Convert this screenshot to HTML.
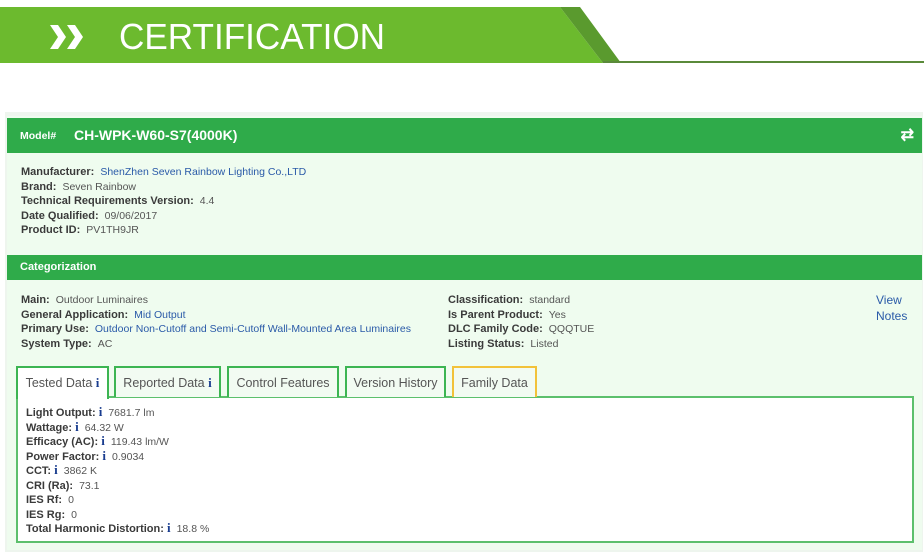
<!DOCTYPE html>
<html><head><style>
*{margin:0;padding:0;box-sizing:border-box}
body{width:924px;height:559px;background:#fff;font-family:"Liberation Sans",Arial,sans-serif;position:relative;overflow:hidden}
.ab{position:absolute}
.lbl{font-weight:bold;color:#3a3a3a;font-size:11px}
.val{color:#555;font-size:10.5px;margin-left:6px}
.lnk{color:#2a5aa8;font-size:10.5px;margin-left:6px}
.row{height:14.5px;line-height:14.5px;white-space:nowrap}
.i{color:#1a3d8f;font-weight:bold;font-family:"Liberation Serif",serif;font-size:13px}
.tab{position:absolute;top:366px;height:31px;border:2px solid #3cb552;border-bottom:none;background:#f2fbf2;color:#555;font-size:12.5px;line-height:30px;text-align:center}
</style></head><body>
<svg class="ab" style="left:0;top:0" width="924" height="70">
<polygon points="0,7 560,7 603,63 0,63" fill="#6cba2e"/>
<polygon points="560,7 580,7 621,63 603,63" fill="#5a9a2e"/>
<rect x="603" y="61" width="321" height="2" fill="#5a8a3a"/>
<polygon points="50,25 58,25 66,37 58,49 50,49 58,37" fill="#fff"/>
<polygon points="67,25 75,25 83,37 75,49 67,49 75,37" fill="#fff"/>
<text x="119" y="49" fill="#fff" font-family="Liberation Sans" font-size="36" textLength="266" lengthAdjust="spacingAndGlyphs">CERTIFICATION</text>
</svg>
<div class="ab" style="left:5px;top:112px;width:918px;height:440px;background:#eef5ee"></div>
<div class="ab" style="left:7px;top:116px;width:915px;height:434px;background:#effcef"></div>
<div class="ab" style="left:7px;top:118px;width:915px;height:35px;background:#2fab4a;color:#fff">
<span class="ab" style="left:13px;top:12px;font-size:10.5px;font-weight:bold">Model#</span>
<span class="ab" style="left:67px;top:9px;font-size:14px;font-weight:bold">CH-WPK-W60-S7(4000K)</span>
<span class="ab" style="right:8px;top:7px;font-size:16px;font-weight:bold">⇄</span>
</div>
<div class="ab" style="left:21px;top:164px">
<div class="row"><span class="lbl">Manufacturer:</span><span class="lnk">ShenZhen Seven Rainbow Lighting Co.,LTD</span></div>
<div class="row"><span class="lbl">Brand:</span><span class="val">Seven Rainbow</span></div>
<div class="row"><span class="lbl">Technical Requirements Version:</span><span class="val">4.4</span></div>
<div class="row"><span class="lbl">Date Qualified:</span><span class="val">09/06/2017</span></div>
<div class="row"><span class="lbl">Product ID:</span><span class="val">PV1TH9JR</span></div>
</div>
<div class="ab" style="left:7px;top:255px;width:915px;height:25px;background:#2fab4a;color:#fff;font-size:11px;font-weight:bold;line-height:25px;padding-left:13px">Categorization</div>
<div class="ab" style="left:21px;top:292px">
<div class="row"><span class="lbl">Main:</span><span class="val">Outdoor Luminaires</span></div>
<div class="row"><span class="lbl">General Application:</span><span class="lnk">Mid Output</span></div>
<div class="row"><span class="lbl">Primary Use:</span><span class="lnk">Outdoor Non-Cutoff and Semi-Cutoff Wall-Mounted Area Luminaires</span></div>
<div class="row"><span class="lbl">System Type:</span><span class="val">AC</span></div>
</div>
<div class="ab" style="left:448px;top:292px">
<div class="row"><span class="lbl">Classification:</span><span class="val">standard</span></div>
<div class="row"><span class="lbl">Is Parent Product:</span><span class="val">Yes</span></div>
<div class="row"><span class="lbl">DLC Family Code:</span><span class="val">QQQTUE</span></div>
<div class="row"><span class="lbl">Listing Status:</span><span class="val">Listed</span></div>
</div>
<div class="ab" style="left:876px;top:292px;color:#2a5aa8;font-size:12px;line-height:16px">View<br>Notes</div>
<div class="ab" style="left:16px;top:396px;width:898px;height:147px;background:#fff;border:2px solid #5cc06c"></div>
<div class="tab" style="left:16px;width:93px;background:#fff;height:33px">Tested Data <span class="i">i</span></div>
<div class="tab" style="left:114px;width:107px">Reported Data <span class="i">i</span></div>
<div class="tab" style="left:227px;width:112px">Control Features</div>
<div class="tab" style="left:345px;width:101px">Version History</div>
<div class="tab" style="left:452px;width:85px;border-color:#f2c23a">Family Data</div>
<div class="ab" style="left:26px;top:405px">
<div class="row"><span class="lbl">Light Output: <span class="i">i</span></span><span class="val">7681.7 lm</span></div>
<div class="row"><span class="lbl">Wattage: <span class="i">i</span></span><span class="val">64.32 W</span></div>
<div class="row"><span class="lbl">Efficacy (AC): <span class="i">i</span></span><span class="val">119.43 lm/W</span></div>
<div class="row"><span class="lbl">Power Factor: <span class="i">i</span></span><span class="val">0.9034</span></div>
<div class="row"><span class="lbl">CCT: <span class="i">i</span></span><span class="val">3862 K</span></div>
<div class="row"><span class="lbl">CRI (Ra):</span><span class="val">73.1</span></div>
<div class="row"><span class="lbl">IES Rf:</span><span class="val">0</span></div>
<div class="row"><span class="lbl">IES Rg:</span><span class="val">0</span></div>
<div class="row"><span class="lbl">Total Harmonic Distortion: <span class="i">i</span></span><span class="val">18.8 %</span></div>
</div>
</body></html>
